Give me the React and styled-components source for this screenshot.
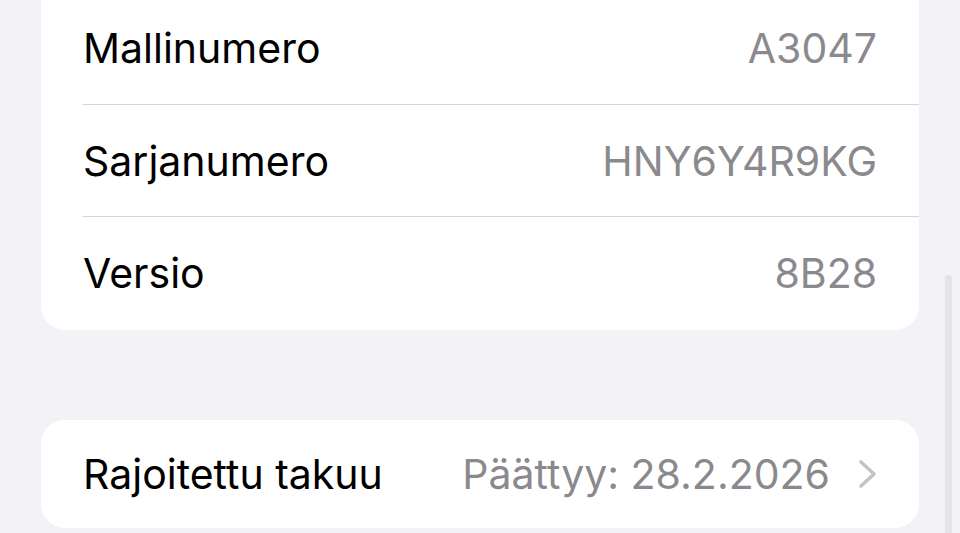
import styled, { createGlobalStyle } from 'styled-components';

const GlobalStyle = createGlobalStyle`
    html, body {
        margin: 0;
        padding: 0;
        background: #f2f2f7;
        overflow: hidden;
    }
    #root {
        height: 533px;
    }
`;

const Page = styled.div`
    position: relative;
    height: 533px;
    overflow: hidden;
    background: #f2f2f7;
    padding: 0 41px;
    box-sizing: border-box;
    font-family: Inter, 'Liberation Sans', sans-serif;
    -webkit-font-smoothing: antialiased;
`;

const Card = styled.ul`
    list-style: none;
    margin: ${(props) => props.$top || '0'} 0 0;
    padding: ${(props) => props.$pad || '0'} 0 ${(props) => props.$padBottom || '0'};
    background: #ffffff;
    border-radius: 24px;
    overflow: hidden;
`;

const Row = styled.li`
    display: flex;
    align-items: center;
    justify-content: space-between;
    height: ${(props) => props.$height || '112px'};
    margin-left: 42px;
    padding-right: 42px;
    box-sizing: border-box;
    border-top: ${(props) => (props.$first ? 'none' : '1px solid #d6d6da')};
`;

const Label = styled.span`
    font-size: 41px;
    color: #000000;
    letter-spacing: 0;
`;

const Value = styled.span`
    display: flex;
    align-items: center;
    gap: 28px;
    font-size: 41px;
    color: #8a8a8e;
    letter-spacing: 0;
`;

const Chevron = styled.svg`
    width: 19px;
    height: 30px;
    flex-shrink: 0;
`;

const ScrollIndicator = styled.div`
    position: absolute;
    right: 8px;
    top: 275px;
    width: 7px;
    height: 300px;
    border-radius: 4px;
    background: #e3e3e8;
`;

const info = [
    { label: 'Mallinumero', value: 'A3047' },
    { label: 'Sarjanumero', value: 'HNY6Y4R9KG' },
    { label: 'Versio', value: '8B28' },
];

export default function App() {
    return (
        <>
            <GlobalStyle />
            <Page>
                <Card $top="-40px" $pad="32px" $padBottom="2px">
                    {info.map((item, i) => (
                        <Row key={item.label} $first={i === 0}>
                            <Label>{item.label}</Label>
                            <Value>{item.value}</Value>
                        </Row>
                    ))}
                </Card>
                <Card $top="90px">
                    <Row $first $height="108px">
                        <Label>Rajoitettu takuu</Label>
                        <Value>
                            Päättyy: 28.2.2026
                            <Chevron viewBox="0 0 19 30" fill="none">
                                <path
                                    d="M3 3 L16 15 L3 27"
                                    stroke="#c4c4c7"
                                    strokeWidth="3.6"
                                    strokeLinecap="round"
                                    strokeLinejoin="round"
                                />
                            </Chevron>
                        </Value>
                    </Row>
                </Card>
                <ScrollIndicator />
            </Page>
        </>
    );
}
